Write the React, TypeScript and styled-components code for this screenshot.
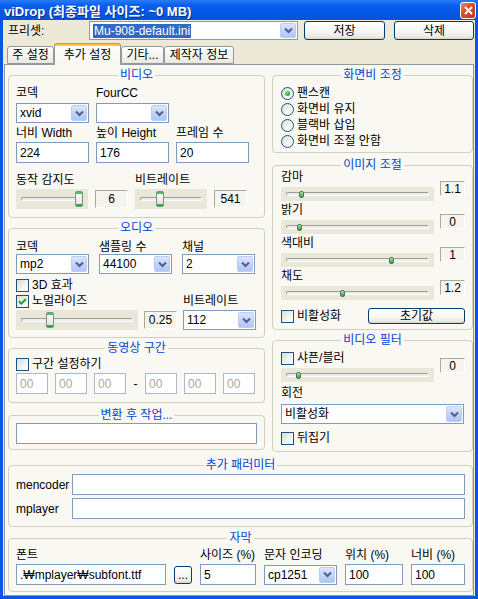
import React from "react";
import styled, { createGlobalStyle } from "styled-components";

const FONT = `"Liberation Sans", "Noto Sans CJK KR", sans-serif`;
const PANEL_BG = "#F9F8F3";

const GlobalStyle = createGlobalStyle`
  html, body { margin: 0; padding: 0; background: #fff; }
  body { font-family: ${FONT}; font-size: 12px; color: #000; }
  * { box-sizing: border-box; }
`;

const Window = styled.div`
  width: 478px;
  height: 599px;
  display: flex;
  flex-direction: column;
  background: #0A55E4;
  overflow: hidden;
`;

const TitleBar = styled.div`
  height: 20px;
  flex: none;
  display: flex;
  align-items: center;
  justify-content: space-between;
  padding: 0 2px 0 4px;
  background: linear-gradient(180deg, #2C7BF6 0%, #0B60EE 25%, #0558E6 60%, #0452DC 100%);
  color: #fff;
  font-weight: bold;
  font-size: 13px;
  text-shadow: 1px 1px 0 #0B2F8A;
`;

const CloseBtn = styled.div`
  width: 16px;
  height: 17px;
  margin-top: 1px;
  border: 1px solid #fff;
  border-radius: 3px;
  background: linear-gradient(135deg, #E9876A 0%, #D9502B 40%, #C13A10 100%);
  display: flex;
  align-items: center;
  justify-content: center;
`;

const Body = styled.div`
  flex: 1;
  margin: 0 3px 3px;
  background: #ECE9D8;
  display: flex;
  flex-direction: column;
`;

const PresetRow = styled.div`
  display: flex;
  align-items: center;
  height: 19px;
  margin-top: 1px;
  padding-left: 5px;
`;

const PresetLabel = styled.span`
  width: 81px;
  line-height: 14px;
`;

const PresetCombo = styled.div`
  width: 209px;
`;

const Highlight = styled.span`
  background: #316AC5;
  color: #fff;
  padding: 0 1px;
  line-height: 14px;
`;

const XPButton = styled.div<{ $w: number; $h: number; $ml?: number }>`
  width: ${(p) => p.$w}px;
  height: ${(p) => p.$h}px;
  margin-left: ${(p) => p.$ml ?? 0}px;
  border: 1px solid #003C74;
  border-radius: 3px;
  background: linear-gradient(180deg, #FFFFFF 0%, #F7F6F2 55%, #ECEBE4 85%, #D8D5CB 100%);
  display: flex;
  align-items: center;
  justify-content: center;
  line-height: 14px;
  flex: none;
`;

const TabStrip = styled.div`
  display: flex;
  align-items: flex-end;
  height: 21px;
  margin-top: 3px;
  padding-left: 4px;
`;

const Tab = styled.div<{ $w: number; $active?: boolean }>`
  width: ${(p) => p.$w}px;
  height: ${(p) => (p.$active ? 22 : 18)}px;
  margin-bottom: ${(p) => (p.$active ? -1 : 0)}px;
  position: relative;
  z-index: ${(p) => (p.$active ? 2 : 1)};
  border: 1px solid #919B9C;
  border-bottom: ${(p) => (p.$active ? "none" : "1px solid #919B9C")};
  border-top: ${(p) => (p.$active ? "1px solid #E68B2C" : "1px solid #919B9C")};
  border-radius: 3px 3px 0 0;
  background: ${(p) =>
    p.$active
      ? `linear-gradient(180deg, #FFC73C 0, #FFC73C 2px, #FCFCFE 2px, ${PANEL_BG} 100%)`
      : "linear-gradient(180deg, #FFFFFF 0%, #F3F2EC 60%, #E8E7E0 100%)"};
  display: flex;
  align-items: center;
  justify-content: center;
  padding-top: ${(p) => (p.$active ? 1 : 0)}px;
  line-height: 14px;
  white-space: nowrap;
`;

const Panel = styled.div`
  flex: 1;
  margin: 0 1px;
  border: 1px solid #919B9C;
  background: ${PANEL_BG};
  padding: 10px 0 0 3px;
  display: flex;
  flex-direction: column;
`;

const Columns = styled.div`
  display: grid;
  grid-template-columns: 257px 201px;
  column-gap: 7px;
  align-items: start;
`;

const Column = styled.div`
  display: flex;
  flex-direction: column;
`;

const Group = styled.div<{ $h: number; $mt?: number; $px?: number }>`
  height: ${(p) => p.$h}px;
  margin-top: ${(p) => p.$mt ?? 0}px;
  border: 1px solid #D0D0BF;
  border-radius: 4px;
  padding: 0 ${(p) => p.$px ?? 7}px;
  display: flex;
  flex-direction: column;
`;

const GroupTitle = styled.div`
  align-self: center;
  margin-top: -8px;
  height: 14px;
  line-height: 14px;
  padding: 0 2px;
  color: #0046D5;
  background: ${PANEL_BG};
`;

const Row = styled.div<{ $cols: string; $gap?: number; $mt?: number }>`
  display: grid;
  grid-template-columns: ${(p) => p.$cols};
  column-gap: ${(p) => p.$gap ?? 7}px;
  margin-top: ${(p) => p.$mt ?? 0}px;
  align-items: center;
`;

const Label = styled.span<{ $mt?: number }>`
  display: block;
  height: 14px;
  line-height: 14px;
  margin-top: ${(p) => p.$mt ?? 0}px;
  white-space: nowrap;
`;

const ComboBox = styled.div<{ $h?: number; $mt?: number }>`
  height: ${(p) => p.$h ?? 20}px;
  margin-top: ${(p) => p.$mt ?? 0}px;
  border: 1px solid #7F9DB9;
  background: #fff;
  display: flex;
  align-items: center;
  justify-content: space-between;
  padding-left: 3px;
  line-height: 14px;
  overflow: hidden;
`;

const ComboArrow = styled.div`
  width: 16px;
  height: calc(100% - 2px);
  margin-right: 1px;
  flex: none;
  border: 1px solid #B9CDF6;
  border-radius: 2px;
  background: linear-gradient(180deg, #DCE6FD 0%, #C3D4FB 50%, #B1C6F5 100%);
  display: flex;
  align-items: center;
  justify-content: center;
`;

const TextBox = styled.div<{ $h?: number; $muted?: boolean; $mt?: number }>`
  height: ${(p) => p.$h ?? 21}px;
  margin-top: ${(p) => p.$mt ?? 0}px;
  border: 1px solid ${(p) => (p.$muted ? "#A9B8CB" : "#7F9DB9")};
  background: #fff;
  color: ${(p) => (p.$muted ? "#ACA899" : "#000")};
  padding: 0 3px;
  display: flex;
  align-items: center;
  line-height: 14px;
  white-space: nowrap;
  overflow: hidden;
`;

const ValueBox = styled.div<{ $h: number; $mt?: number }>`
  height: ${(p) => p.$h}px;
  margin-top: ${(p) => p.$mt ?? 0}px;
  border: 1px solid;
  border-color: #ACA899 #FFFFFF #FFFFFF #ACA899;
  background: #F5F4EE;
  display: flex;
  align-items: center;
  justify-content: center;
  line-height: 14px;
`;

const TrackArea = styled.div<{ $h: number }>`
  position: relative;
  height: ${(p) => p.$h}px;
  background: #E9E7DA;
`;

const Groove = styled.div`
  position: absolute;
  left: 5px;
  right: 5px;
  top: 50%;
  height: 4px;
  margin-top: -2px;
  border-radius: 2px;
  border: 1px solid;
  border-color: #9D9C99 #FFFFFF #FFFFFF #9D9C99;
  background: #EDEDE8;
`;

const BigThumb = styled.div`
  position: absolute;
  top: 50%;
  width: 8px;
  height: 16px;
  margin-top: -8px;
  border: 1px solid #7E8E8C;
  border-radius: 2px;
  background: linear-gradient(180deg, #45C553 0, #45C553 2px, #FBFBF8 2px, #E4E4DC 12px, #3DB54A 12px, #2F9A3C 100%);
`;

const SmallThumb = styled.div`
  position: absolute;
  top: 50%;
  width: 5px;
  height: 7px;
  margin-top: -3px;
  border: 1px solid #4C7A53;
  border-radius: 2px;
  background: linear-gradient(180deg, #B9E3BE 0%, #5CB76A 60%, #3C9A4A 100%);
`;

const SliderBlock = styled.div<{ $mt?: number }>`
  display: grid;
  grid-template-columns: 153px 25px;
  grid-template-rows: 15px 17px;
  column-gap: 6px;
  margin-top: ${(p) => p.$mt ?? 0}px;
`;

const BlockValue = styled(ValueBox)`
  grid-column: 2;
  grid-row: 1 / span 2;
  align-self: start;
`;

const BlockTrack = styled.div`
  grid-column: 1;
  grid-row: 2;
  align-self: center;
`;

const CheckRow = styled.div<{ $mt?: number }>`
  display: flex;
  align-items: center;
  gap: 3px;
  height: 14px;
  margin-top: ${(p) => p.$mt ?? 0}px;
  line-height: 14px;
  white-space: nowrap;
`;

const CheckBox = styled.div`
  width: 13px;
  height: 13px;
  flex: none;
  border: 1px solid #1C5180;
  background: linear-gradient(135deg, #DCDCD7 0%, #F4F4F0 60%, #FFFFFF 100%);
  display: flex;
  align-items: center;
  justify-content: center;
`;

const RadioRow = styled.div`
  display: flex;
  align-items: center;
  gap: 3px;
  height: 16px;
  line-height: 14px;
  white-space: nowrap;
`;

const RadioCircle = styled.div`
  width: 13px;
  height: 13px;
  flex: none;
  border-radius: 50%;
  border: 1px solid #1C5180;
  background: linear-gradient(135deg, #DCDCD7 0%, #F4F4F0 60%, #FFFFFF 100%);
  display: flex;
  align-items: center;
  justify-content: center;
`;

const RadioDot = styled.div`
  width: 5px;
  height: 5px;
  border-radius: 50%;
  background: radial-gradient(circle at 35% 35%, #8BE08E 0%, #21A121 70%);
`;

const RadioList = styled.div`
  display: flex;
  flex-direction: column;
  margin-top: 3px;
`;

const Dash = styled.span`
  text-align: center;
  line-height: 14px;
`;

const Chevron = () => (
  <svg width="9" height="7" viewBox="0 0 9 7">
    <path d="M1 1.5 L4.5 5 L8 1.5" fill="none" stroke="#4D6185" strokeWidth="2" />
  </svg>
);

const Combo = ({ value, h, mt }: { value?: React.ReactNode; h?: number; mt?: number }) => (
  <ComboBox $h={h} $mt={mt}>
    <span>{value}</span>
    <ComboArrow>
      <Chevron />
    </ComboArrow>
  </ComboBox>
);

const Slider = ({ at, h = 20 }: { at: number; h?: number }) => (
  <TrackArea $h={h}>
    <Groove />
    <BigThumb style={{ left: at - 4 }} />
  </TrackArea>
);

const MiniSlider = ({ at }: { at: number }) => (
  <TrackArea $h={14}>
    <Groove />
    <SmallThumb style={{ left: at - 3 }} />
  </TrackArea>
);

const Check = ({ label, checked, mt }: { label: string; checked?: boolean; mt?: number }) => (
  <CheckRow $mt={mt}>
    <CheckBox>
      {checked && (
        <svg width="9" height="9" viewBox="0 0 9 9">
          <path d="M1 4.2 L3.4 6.6 L8 2" fill="none" stroke="#21A121" strokeWidth="2" />
        </svg>
      )}
    </CheckBox>
    <span>{label}</span>
  </CheckRow>
);

const Radio = ({ label, checked }: { label: string; checked?: boolean }) => (
  <RadioRow>
    <RadioCircle>{checked && <RadioDot />}</RadioCircle>
    <span>{label}</span>
  </RadioRow>
);

const ImageSlider = ({
  label,
  at,
  value,
  mt,
  boxTop = 11,
}: {
  label: React.ReactNode;
  at: number;
  value: string;
  mt?: number;
  boxTop?: number;
}) => (
  <SliderBlock $mt={mt}>
    {typeof label === "string" ? <Label>{label}</Label> : label}
    <BlockValue $h={15} $mt={boxTop}>{value}</BlockValue>
    <BlockTrack>
      <MiniSlider at={at} />
    </BlockTrack>
  </SliderBlock>
);

export default function App() {
  return (
    <>
      <GlobalStyle />
      <Window>
        <TitleBar>
          <span>viDrop (최종파일 사이즈: ~0 MB)</span>
          <CloseBtn>
            <svg width="9" height="9" viewBox="0 0 9 9">
              <path d="M1 1 L8 8 M8 1 L1 8" stroke="#fff" strokeWidth="2" />
            </svg>
          </CloseBtn>
        </TitleBar>
        <Body>
          <PresetRow>
            <PresetLabel>프리셋:</PresetLabel>
            <PresetCombo>
              <Combo h={19} value={<Highlight>Mu-908-default.ini</Highlight>} />
            </PresetCombo>
            <XPButton $w={81} $h={19} $ml={6}>저장</XPButton>
            <XPButton $w={80} $h={19} $ml={9}>삭제</XPButton>
          </PresetRow>

          <TabStrip>
            <Tab $w={47}>주 설정</Tab>
            <Tab $w={67} $active>추가 설정</Tab>
            <Tab $w={43}>기타...</Tab>
            <Tab $w={70}>제작자 정보</Tab>
          </TabStrip>

          <Panel>
            <Columns>
              <Column>
                <Group $h={143}>
                  <GroupTitle>비디오</GroupTitle>
                  <Row $cols="73px 73px 73px" $mt={4}>
                    <Label>코덱</Label>
                    <Label>FourCC</Label>
                  </Row>
                  <Row $cols="73px 73px 73px" $mt={3}>
                    <Combo value="xvid" />
                    <Combo />
                  </Row>
                  <Row $cols="73px 73px 73px" $mt={3}>
                    <Label>너비 Width</Label>
                    <Label>높이 Height</Label>
                    <Label>프레임 수</Label>
                  </Row>
                  <Row $cols="73px 73px 73px" $mt={2}>
                    <TextBox>224</TextBox>
                    <TextBox>176</TextBox>
                    <TextBox>20</TextBox>
                  </Row>
                  <Row $cols="119px auto" $gap={0} $mt={10}>
                    <Label>동작 감지도</Label>
                    <Label>비트레이트</Label>
                  </Row>
                  <Row $cols="72px 33px 72px 33px" $mt={2}>
                    <Slider at={63} />
                    <ValueBox $h={18}>6</ValueBox>
                    <Slider at={25} />
                    <ValueBox $h={18}>541</ValueBox>
                  </Row>
                </Group>

                <Group $h={110} $mt={10}>
                  <GroupTitle>오디오</GroupTitle>
                  <Row $cols="73px 73px 73px" $gap={10} $mt={5}>
                    <Label>코덱</Label>
                    <Label>샘플링 수</Label>
                    <Label>채널</Label>
                  </Row>
                  <Row $cols="73px 73px 73px" $gap={10}>
                    <Combo value="mp2" />
                    <Combo value="44100" />
                    <Combo value="2" />
                  </Row>
                  <Check label="3D 효과" mt={4} />
                  <Row $cols="167px 73px" $gap={0} $mt={2}>
                    <Check label="노멀라이즈" checked />
                    <Label>비트레이트</Label>
                  </Row>
                  <Row $cols="122px 33px 73px" $gap={6} $mt={2}>
                    <Slider at={34} />
                    <ValueBox $h={18}>0.25</ValueBox>
                    <Combo value="112" />
                  </Row>
                </Group>

                <Group $h={55} $mt={10}>
                  <GroupTitle>동영상 구간</GroupTitle>
                  <Check label="구간 설정하기" mt={2} />
                  <Row $cols="32px 32px 32px 5px 32px 32px 32px" $mt={2}>
                    <TextBox $muted>00</TextBox>
                    <TextBox $muted>00</TextBox>
                    <TextBox $muted>00</TextBox>
                    <Dash>-</Dash>
                    <TextBox $muted>00</TextBox>
                    <TextBox $muted>00</TextBox>
                    <TextBox $muted>00</TextBox>
                  </Row>
                </Group>

                <Group $h={35} $mt={12}>
                  <GroupTitle>변환 후 작업...</GroupTitle>
                  <TextBox $mt={1} />
                </Group>
              </Column>

              <Column>
                <Group $h={78} $px={8}>
                  <GroupTitle>화면비 조정</GroupTitle>
                  <RadioList>
                    <Radio label="팬스캔" checked />
                    <Radio label="화면비 유지" />
                    <Radio label="블랙바 삽입" />
                    <Radio label="화면비 조절 안함" />
                  </RadioList>
                </Group>

                <Group $h={165} $mt={12} $px={8}>
                  <GroupTitle>이미지 조절</GroupTitle>
                  <ImageSlider label="감마" at={21} value="1.1" mt={-2} />
                  <ImageSlider label="밝기" at={19} value="0" mt={1} />
                  <ImageSlider label="색대비" at={111} value="1" mt={1} />
                  <ImageSlider label="채도" at={62} value="1.2" mt={1} />
                  <Row $cols="87px 97px" $gap={0} $mt={7}>
                    <Check label="비활성화" />
                    <XPButton $w={97} $h={16}>초기값</XPButton>
                  </Row>
                </Group>

                <Group $h={112} $mt={10} $px={8}>
                  <GroupTitle>비디오 필터</GroupTitle>
                  <ImageSlider label={<Check label="샤픈/블러" />} at={18} value="0" mt={4} boxTop={7} />
                  <Label $mt={3}>회전</Label>
                  <Combo value="비활성화" mt={4} />
                  <Check label="뒤집기" mt={7} />
                </Group>
              </Column>
            </Columns>

            <Group $h={62} $mt={13}>
              <GroupTitle>추가 패러미터</GroupTitle>
              <Row $cols="56px 1fr" $gap={0} $mt={2}>
                <Label>mencoder</Label>
                <TextBox />
              </Row>
              <Row $cols="56px 1fr" $gap={0} $mt={3}>
                <Label>mplayer</Label>
                <TextBox />
              </Row>
            </Group>

            <Group $h={54} $mt={11}>
              <GroupTitle>자막</GroupTitle>
              <Row $cols="150px 18px 56px 73px 58px 1fr" $gap={8} $mt={3}>
                <Label>폰트</Label>
                <span />
                <Label>사이즈 (%)</Label>
                <Label>문자 인코딩</Label>
                <Label>위치 (%)</Label>
                <Label>너비 (%)</Label>
              </Row>
              <Row $cols="150px 18px 56px 73px 58px 1fr" $gap={8} $mt={2}>
                <TextBox>.₩mplayer₩subfont.ttf</TextBox>
                <XPButton $w={18} $h={18}>...</XPButton>
                <TextBox>5</TextBox>
                <Combo value="cp1251" />
                <TextBox>100</TextBox>
                <TextBox>100</TextBox>
              </Row>
            </Group>
          </Panel>
        </Body>
      </Window>
    </>
  );
}
